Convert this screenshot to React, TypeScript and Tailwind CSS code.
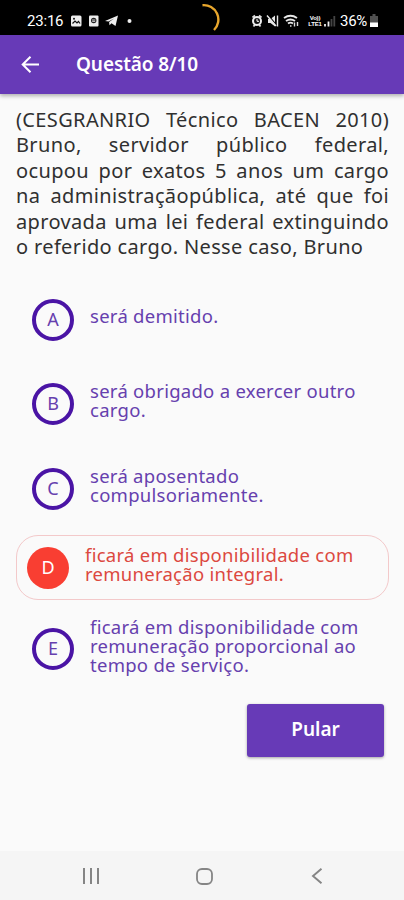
import { ReactNode } from 'react';

type Option = {
    letter: string;
    lines: string[];
    row: string;
    text: string;
    selected?: boolean;
};

const question = [
    '(CESGRANRIO Técnico BACEN 2010)',
    'Bruno, servidor público federal,',
    'ocupou por exatos 5 anos um cargo',
    'na administraçãopública, até que foi',
    'aprovada uma lei federal extinguindo',
];

const options: Option[] = [
    { letter: 'A', lines: ['será demitido.'], row: 'mt-[40px] h-[42px]', text: 'pb-[10px]' },
    { letter: 'B', lines: ['será obrigado a exercer outro', 'cargo.'], row: 'mt-[42px] h-[42px]', text: 'pb-[9px]' },
    { letter: 'C', lines: ['será aposentado', 'compulsoriamente.'], row: 'mt-[43px] h-[42px]', text: 'pb-[9px]' },
    { letter: 'D', lines: ['ficará em disponibilidade com', 'remuneração integral.'], row: 'mt-[25px] h-[65px]', text: 'pb-[8px]', selected: true },
    { letter: 'E', lines: ['ficará em disponibilidade com', 'remuneração proporcional ao', 'tempo de serviço.'], row: 'mt-[28px] h-[42px]', text: 'pb-[8px]' },
];

function StatusBar() {
    return (
        <div className="relative flex h-[35px] items-center bg-black pt-[7px] pl-[27px] text-white">
            <span className="w-[43px] font-['Roboto',sans-serif] text-[15px] leading-none tracking-[-0.2px]">23:16</span>
            <svg className="h-3 w-[64px]" viewBox="0 0 64 12" fill="none">
                <rect x="1" y=".5" width="10.5" height="11" rx="1.5" fill="#eee" />
                <path d="M2.5 8.5 5 6l2 2 1.5-1.5L10 8.5" stroke="#111" strokeWidth="1.2" />
                <circle cx="4" cy="3.7" r="1" fill="#111" />
                <rect x="19" y=".5" width="9.5" height="11" rx="1" fill="#eee" />
                <circle cx="23.7" cy="5.5" r="2.7" fill="#222" />
                <path d="M22 5h3.4M22.2 6.4h3" stroke="#ddd" strokeWidth=".9" />
                <path d="m35 6 13-5.5L45.5 11l-4-2.7-2 2-.4-3.2 5-3.6-5.6 3Z" fill="#eee" />
                <circle cx="59.5" cy="6" r="2" fill="#eee" />
            </svg>
            <svg className="absolute top-0 left-[196px] h-8 w-6" viewBox="0 0 24 32" fill="none">
                <path d="M6.5 5.2A14.5 14.5 0 0 1 18 30" stroke="#e8a62c" strokeWidth="2.4" />
            </svg>
            <svg className="absolute top-[14px] left-[251px] h-[14px] w-[86px]" viewBox="0 0 86 14" fill="none">
                <path d="m1.5 3.5 2.5-2M8 1.5l2.5 2M2.5 12.5l1.5-2M9.5 12.5l-1.5-2" stroke="#ddd" strokeWidth="1.8" />
                <circle cx="6" cy="7" r="4" fill="#111" stroke="#eee" strokeWidth="2" />
                <path d="M6 4.8v2.5h2" stroke="#fff" />
                <path d="M17 5h2.5L24 1.5v11L19.5 9H17z" fill="#e8e8e8" />
                <path d="m17.3 1.2 8.5 10.5" stroke="#000" strokeWidth="1.3" />
                <path d="m16 1.5 9 10.5M26.5 1.5v11" stroke="#e8e8e8" strokeWidth="1.4" />
                <path d="M33 4q6.5-4.5 13 0M35 7q4.5-3 9 0M37 9.5q2.5-1.8 5 0" stroke="#e8e8e8" strokeWidth="1.9" />
                <path d="M39 12h1.5M43.5 8.5v4m3-.5v-4" stroke="#ddd" strokeWidth="1.4" />
                <path d="M74 10v2.5M77.5 7.5v5" stroke="#eee" strokeWidth="1.8" />
                <path d="M80.5 5v7.5M83.3 2v10.5" stroke="#444" strokeWidth="1.8" />
            </svg>
            <span className="absolute top-[15px] left-[305px] w-5 text-center font-['Liberation_Sans',sans-serif] text-[6px] leading-[6px] font-bold tracking-[-0.2px]">
                Vo))<br />LTE1
            </span>
            <span className="absolute top-[14px] left-[340px] font-['Roboto',sans-serif] text-[15px] leading-[15px] tracking-[-0.3px]">36%</span>
            <svg className="absolute top-[14px] left-[370px] h-[13px] w-2" viewBox="0 0 8 13">
                <path d="M2.5 0h3v2H8v11H0V2h2.5z" fill="#505050" />
                <path d="M0 8.5h8V13H0z" fill="#fff" />
            </svg>
        </div>
    );
}

function NavButton({ children }: { children: ReactNode }) {
    return <button className="flex h-full w-[113px] items-center justify-center text-[#858585]">{children}</button>;
}

function OptionRow({ option }: { option: Option }) {
    const { letter, lines, row, text, selected } = option;
    return (
        <button
            className={`${row} flex items-center text-left ${
                selected ? 'mx-4 w-[373px] rounded-[22px] border border-[#f3c9ca] pl-[10px] text-[#dc4840]' : 'pl-8 text-[#6640ae]'
            }`}
        >
            <span
                className={`flex size-[42px] shrink-0 items-center justify-center rounded-full pb-0.5 text-[18px] leading-none ${
                    selected ? 'bg-[#f93e32] text-white' : 'border-[4px] border-[#4a14a5]'
                }`}
            >
                {letter}
            </span>
            <span className={`${text} ml-4 text-[18.5px] leading-[19px] tracking-[0.27px] whitespace-nowrap`}>
                {lines.map((line) => (
                    <span key={line} className="block">{line}</span>
                ))}
            </span>
        </button>
    );
}

export default function App() {
    return (
        <main className="flex h-[900px] w-[404px] flex-col overflow-hidden bg-[#fafafa] font-['Noto_Sans',sans-serif]">
            <StatusBar />
            <header className="flex h-[59px] shrink-0 items-center bg-[#673ab7] pl-[21px] text-white shadow-[0_2px_4px_rgba(0,0,0,0.3)]">
                <svg className="size-[19px]" viewBox="0 0 19 19" fill="none" stroke="currentColor" strokeWidth="2">
                    <path d="M18 9.5H2M9.5 1.7 1.7 9.5l7.8 7.8" />
                </svg>
                <h1 className="ml-[36px] pb-px text-[19px] leading-none font-semibold tracking-[-0.1px] whitespace-nowrap">Questão 8/10</h1>
            </header>

            <section className="mt-[13px] w-[373px] ml-4 text-[20px] leading-[25.4px] tracking-[0.36px] whitespace-nowrap text-[#303030]">
                {question.map((line) => (
                    <p key={line} className="[text-align-last:justify]">{line}</p>
                ))}
                <p>o referido cargo. Nesse caso, Bruno</p>
            </section>

            <div className="flex flex-col">
                {options.map((option) => (
                    <OptionRow key={option.letter} option={option} />
                ))}
            </div>

            <button className="mt-[34px] mr-5 h-[53px] w-[137px] shrink-0 self-end rounded-[3px] bg-[#673ab7] pb-[3px] text-[19px] font-semibold text-white shadow-[0_1px_3px_rgba(0,0,0,0.35)]">
                Pular
            </button>

            <nav className="mt-auto flex h-[49px] shrink-0 items-center justify-center bg-[#f5f5f5] pt-px pl-[4px]">
                <NavButton>
                    <svg className="size-[16px]" viewBox="0 0 16 16" stroke="currentColor" strokeWidth="2">
                        <path d="M1 0v16M8 0v16M15 0v16" />
                    </svg>
                </NavButton>
                <NavButton>
                    <svg className="size-[17px]" viewBox="0 0 17 17" fill="none" stroke="currentColor" strokeWidth="1.8">
                        <rect x="1" y="1" width="15" height="15" rx="5" />
                    </svg>
                </NavButton>
                <NavButton>
                    <svg className="size-[16px]" viewBox="0 0 16 16" fill="none" stroke="currentColor" strokeWidth="1.9">
                        <path d="M12.5 .7 4 8l8.5 7.3" />
                    </svg>
                </NavButton>
            </nav>
        </main>
    );
}
